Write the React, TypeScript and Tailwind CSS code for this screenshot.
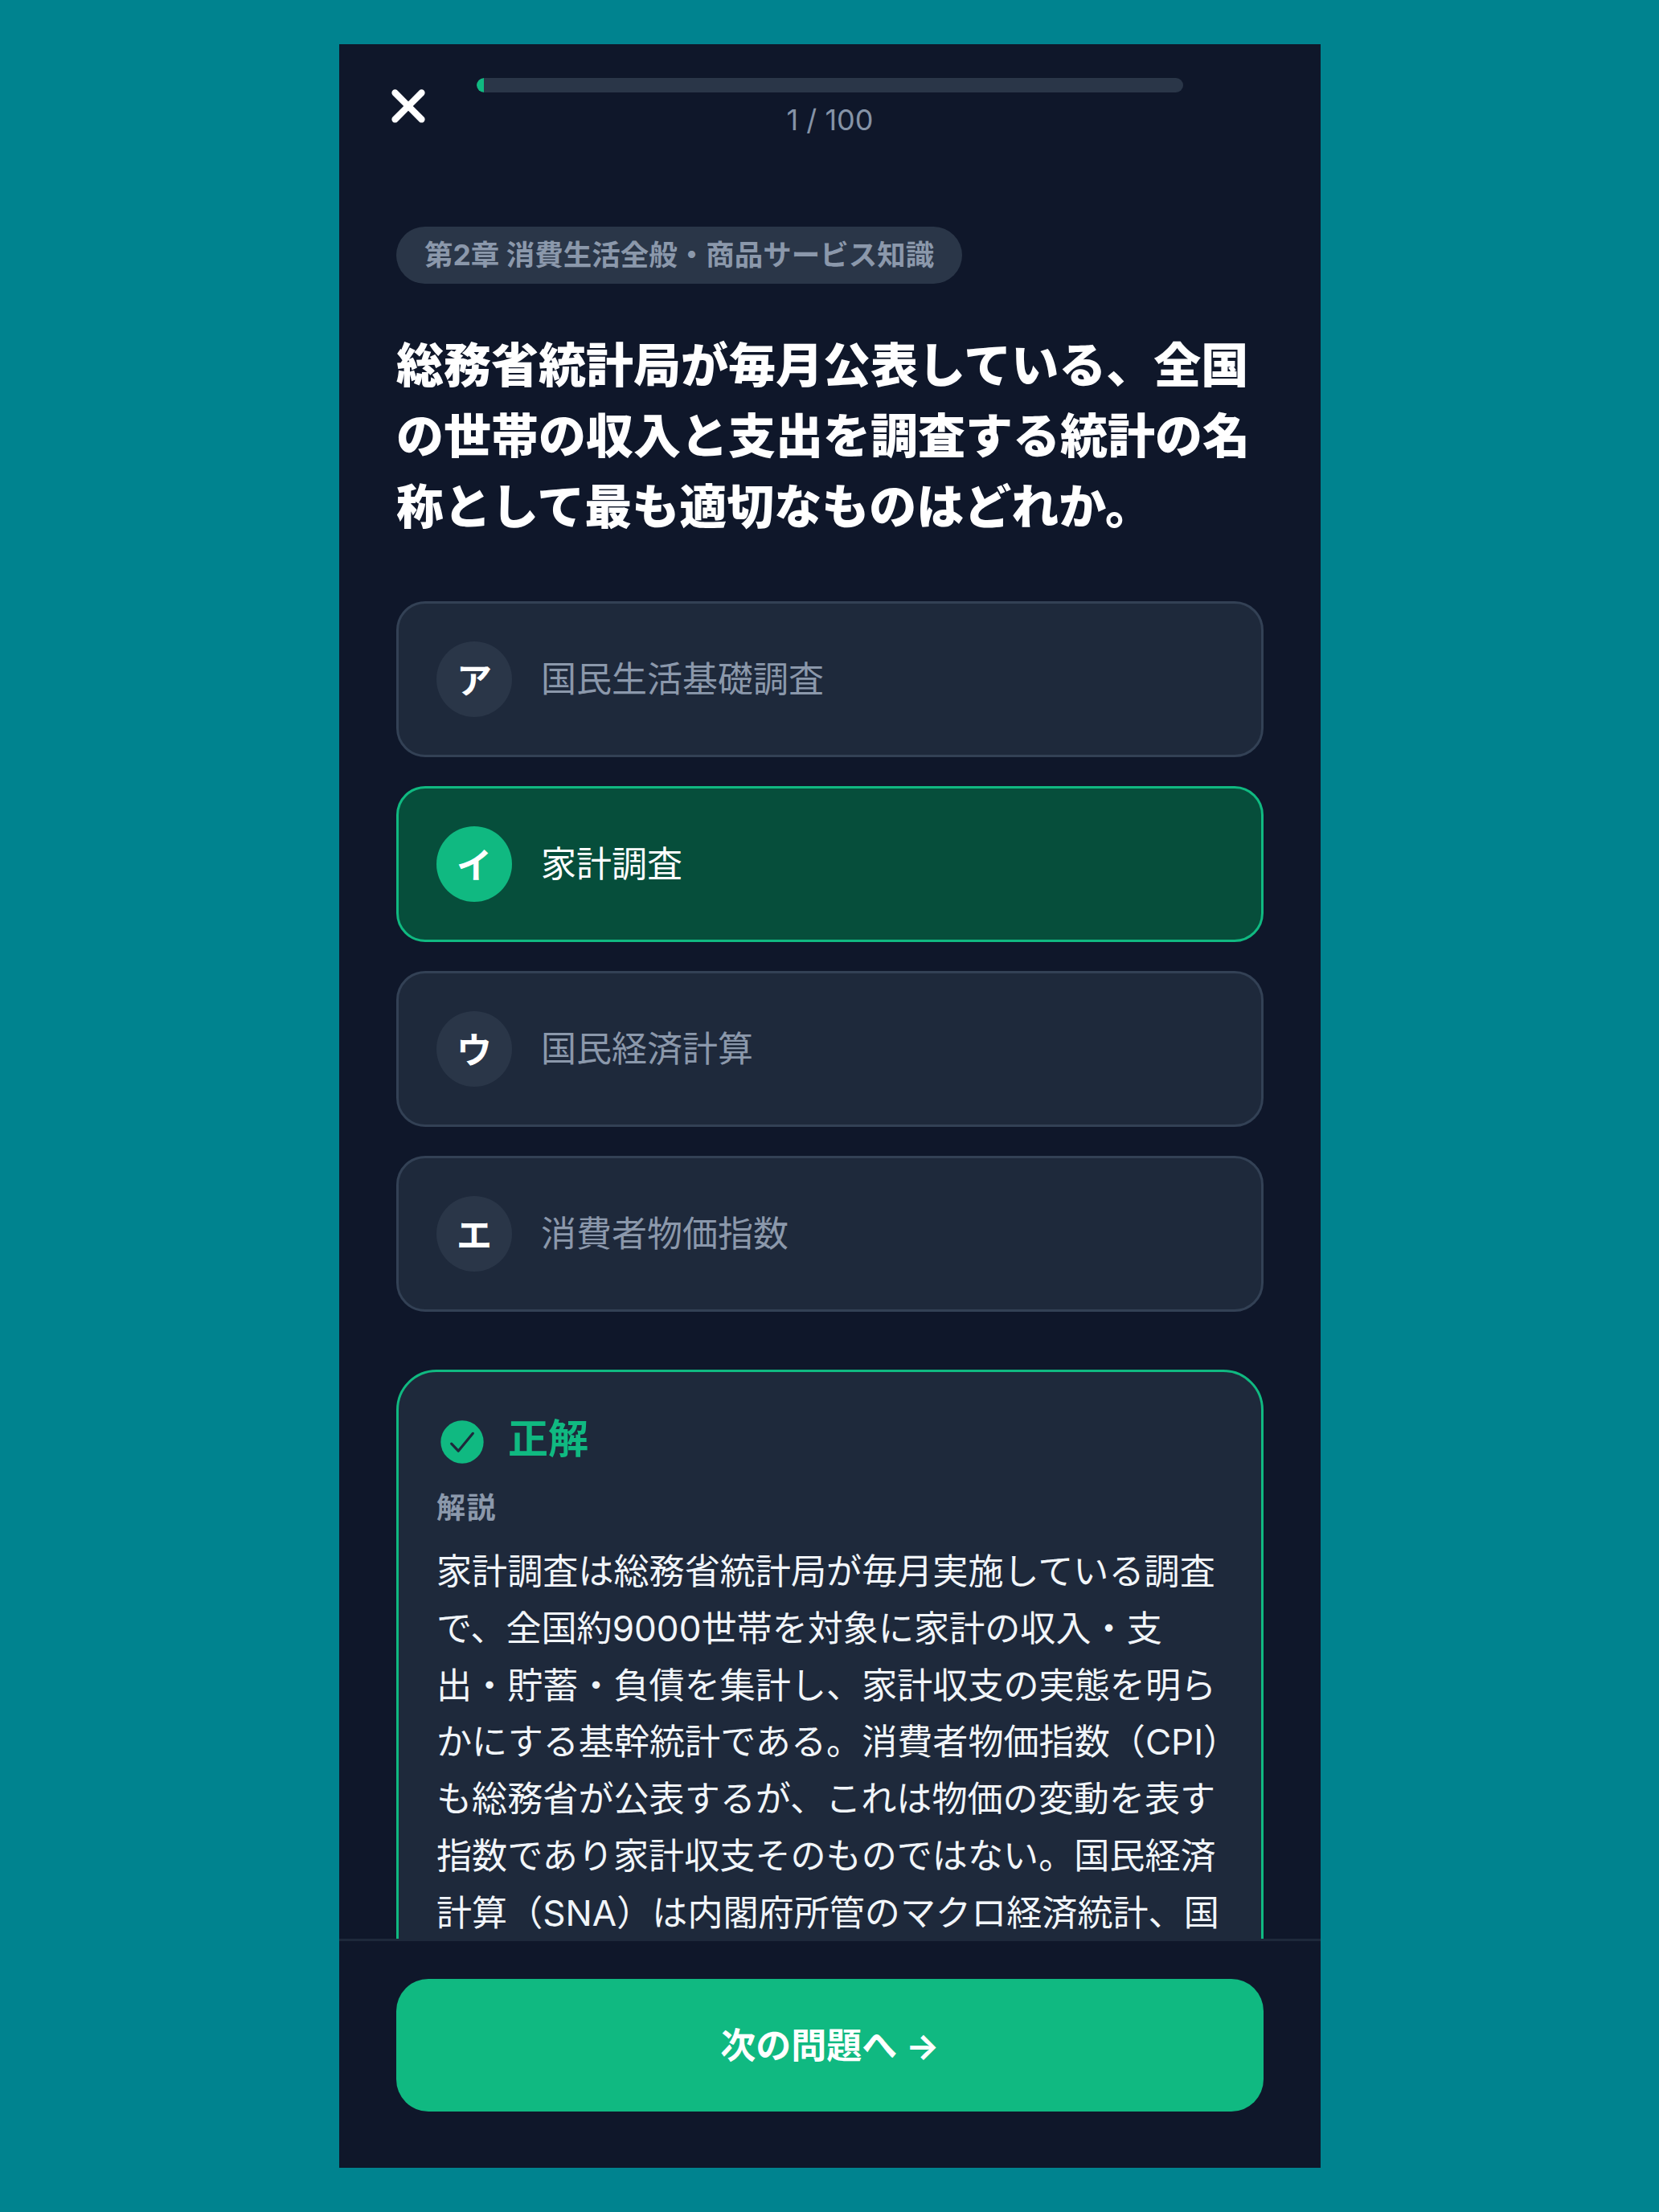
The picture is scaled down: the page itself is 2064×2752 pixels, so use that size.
import React from "react";
import { X } from "lucide-react";

type Choice = {
  label: string;
  text: string;
  correct?: boolean;
};

const choices: Choice[] = [
  { label: "ア", text: "国民生活基礎調査" },
  { label: "イ", text: "家計調査", correct: true },
  { label: "ウ", text: "国民経済計算" },
  { label: "エ", text: "消費者物価指数" },
];

const ChoiceRow: React.FC<{ choice: Choice }> = ({ choice }) => {
  const rowClass = choice.correct
    ? "border-[#10b981] bg-[#064e3b] text-white"
    : "border-[#334155] bg-[#1e293b] text-[#8b98ab]";
  const badgeClass = choice.correct ? "bg-[#10b981]" : "bg-[#2a3648]";
  return (
    <div
      className={`flex h-[194px] items-center gap-[36px] rounded-[36px] border-[3px] pl-[47px] text-[44px] ${rowClass}`}
    >
      <span
        className={`flex h-[94px] w-[94px] items-center justify-center rounded-full pt-[3px] text-[44px] font-bold text-white ${badgeClass}`}
      >
        {choice.label}
      </span>
      <span>{choice.text}</span>
    </div>
  );
};

export default function App() {
  return (
    <div
      className="flex h-[2752px] w-[2064px] items-center justify-center bg-[#00838f] pl-[1px]"
      style={{ fontFamily: '"Inter", "Noto Sans CJK JP", sans-serif' }}
    >
      <div className="flex h-[2642px] w-[1221px] flex-col overflow-hidden bg-[#0f172a]">
        <header className="flex items-start pl-[53px] pr-[171px] pt-[42px]">
          <X size={66} strokeWidth={3} className="mt-[2px] shrink-0 text-white" />
          <div className="ml-[52px] flex flex-1 flex-col items-center">
            <div className="h-[18px] w-full overflow-hidden rounded-full bg-[#2a3648]">
              <div className="h-full w-[1%] rounded-l-full bg-[#10b981]" />
            </div>
            <div className="mt-[9px] text-[36px] leading-[50px] text-[#8593a7]">1 / 100</div>
          </div>
        </header>

        <main className="flex-1 overflow-hidden px-[71px] pt-[108px]">
          <div className="inline-flex h-[71px] items-center rounded-full bg-[#2a3648] px-[35px] text-[35.5px] font-bold text-[#8b98ab]">
            第2章 消費生活全般・商品サービス知識
          </div>
          <h1 className="mb-[73px] mt-[58px] text-[59px] font-black leading-[88px] text-white">
            総務省統計局が毎月公表している、全国の世帯の収入と支出を調査する統計の名称として最も適切なものはどれか。
          </h1>

          <div className="flex flex-col gap-[36px]">
            {choices.map((choice) => (
              <ChoiceRow key={choice.label} choice={choice} />
            ))}
          </div>

          <section className="mt-[72px] rounded-[50px] border-[3px] border-[#10b981] bg-[#1e293b] pb-[50px] pl-[47px] pr-[46px] pt-[47px]">
            <div className="flex h-[80px] items-center gap-[25px]">
              <svg viewBox="0 0 24 24" className="h-[64px] w-[64px] shrink-0">
                <circle cx="12" cy="12" r="10" fill="#10b981" />
                <path
                  d="M7 12.8l3.2 3.4L17 8"
                  fill="none"
                  stroke="#1e293b"
                  strokeWidth="1.2"
                  strokeLinecap="round"
                  strokeLinejoin="round"
                />
              </svg>
              <span className="-mt-[8px] text-[50px] font-bold text-[#10b981]">正解</span>
            </div>
            <div className="mt-[15px] text-[36px] font-bold leading-[54px] tracking-[1.5px] text-[#8b98ab]">
              解説
            </div>
            <p className="mt-[17px] text-[44.1px] leading-[70.8px] text-[#f1f5f9]">
              家計調査は総務省統計局が毎月実施している調査で、全国約9000世帯を対象に家計の収入・支出・貯蓄・負債を集計し、家計収支の実態を明らかにする基幹統計である。消費者物価指数（CPI）も総務省が公表するが、これは物価の変動を表す指数であり家計収支そのものではない。国民経済計算（SNA）は内閣府所管のマクロ経済統計、国
            </p>
          </section>
        </main>

        <footer className="h-[285px] shrink-0 border-t-[3px] border-[#1e293b] bg-[#0f172a] px-[71px] pt-[47px]">
          <button className="flex h-[165px] w-full items-center justify-center rounded-[40px] bg-[#10b981] text-[44px] font-bold text-white">
            次の問題へ →
          </button>
        </footer>
      </div>
    </div>
  );
}
